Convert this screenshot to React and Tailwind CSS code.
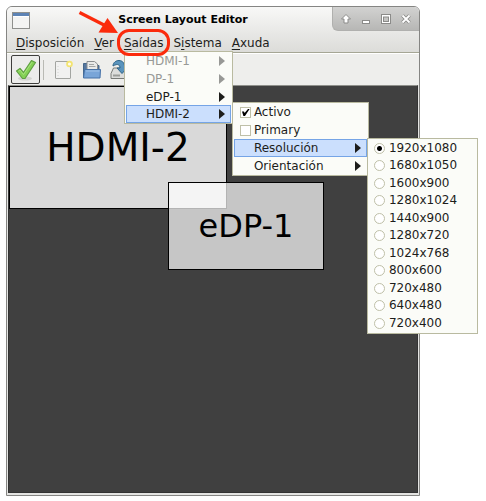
import React, { useState } from 'react'

const RESOLUTIONS = [
  '1920x1080',
  '1680x1050',
  '1600x900',
  '1280x1024',
  '1440x900',
  '1280x720',
  '1024x768',
  '800x600',
  '720x480',
  '640x480',
  '720x400',
]

const POPUP = 'absolute z-10 grid auto-rows-fr border border-[#b9baa0] bg-[#fbfcf8]'
const ROW = 'flex w-full items-center border text-left whitespace-nowrap'

function Arrow() {
  return (
    <svg viewBox="0 0 6 10" className="ml-auto h-[10px] w-[6px]" fill="currentColor" aria-hidden="true">
      <path d="M0 0L6 5L0 10Z" />
    </svg>
  )
}

function MenuRow({ label, selected, disabled, className, children }) {
  return (
    <li className="relative grid min-h-0">
      <button
        type="button"
        disabled={disabled}
        className={`${ROW} pr-[5px] ${className} ${selected ? 'border-[#75a4e6] bg-[#cbdffd]' : 'border-transparent'} ${disabled ? 'text-[#989996]' : ''}`}
      >
        {label}
        <Arrow />
      </button>
      {children}
    </li>
  )
}

function ResolutionMenu() {
  const [resolution, setResolution] = useState('1920x1080')

  return (
    <ul className={`${POPUP} -top-px left-[133px] h-[196px] w-[111px] pb-px leading-[15px]`}>
      {RESOLUTIONS.map((r) => (
        <li key={r} className="grid min-h-0">
          <label className={`${ROW} gap-1 border-transparent pl-[5px]`}>
            <input
              type="radio"
              name="resolution"
              checked={resolution === r}
              onChange={() => setResolution(r)}
              className="size-[11px] appearance-none rounded-full border border-[#bfc0a8] bg-white bg-[radial-gradient(circle,#000_0_2px,transparent_3px)] not-checked:bg-none"
            />
            {r}
          </label>
        </li>
      ))}
    </ul>
  )
}

function CheckRow({ label, defaultChecked }) {
  return (
    <li className="grid min-h-0">
      <label className={`${ROW} border-transparent pl-[5px]`}>
        <span className="relative mr-[3px] size-[11px]">
          <input
            type="checkbox"
            defaultChecked={defaultChecked}
            className="peer block size-[11px] appearance-none border border-[#bfc0a8] bg-white"
          />
          <svg viewBox="0 0 11 11" className="pointer-events-none absolute inset-0 hidden peer-checked:block" aria-hidden="true">
            <path d="M2 4.4L4 4.4L4.6 6L8 2L9.6 2L5 9L3.4 9Z" fill="#000" />
          </svg>
        </span>
        {label}
      </label>
    </li>
  )
}

function OutputMenu() {
  return (
    <ul className={`${POPUP} -top-[3px] left-[106px] h-[74px] w-[137px] px-px`}>
      <CheckRow label="Activo" defaultChecked />
      <CheckRow label="Primary" />
      <MenuRow label="Resolución" selected className="pl-[19px]">
        <ResolutionMenu />
      </MenuRow>
      <MenuRow label="Orientación" className="pl-[19px]" />
    </ul>
  )
}

function OutputsPopup() {
  return (
    <ul className={`${POPUP} top-full left-0 -mt-px h-[73px] w-[109px] px-px leading-4`}>
      <MenuRow label="HDMI-1" disabled className="pl-[19px]" />
      <MenuRow label="DP-1" disabled className="pl-[19px]" />
      <MenuRow label="eDP-1" className="pl-[19px]" />
      <MenuRow label="HDMI-2" selected className="pl-[19px]">
        <OutputMenu />
      </MenuRow>
    </ul>
  )
}

function Callout() {
  return (
    <>
      <span className="pointer-events-none absolute -inset-x-[7px] -top-[4px] -bottom-[4px] z-20 rounded-[12px] border-3 border-[#fb2b0c]" />
      <svg
        viewBox="0 0 42 26"
        className="pointer-events-none absolute -top-[22px] -left-[46px] z-20 h-[26px] w-[42px]"
        aria-hidden="true"
      >
        <path d="M1.5 1.5L28 15" stroke="#fb2b0c" strokeWidth="3.200" fill="none" />
        <path d="M40 22L20.500 21.500L29.500 7Z" fill="#fb2b0c" />
      </svg>
    </>
  )
}

function MenuItem({ before, mnemonic, after, children }) {
  return (
    <li className="relative">
      <button type="button" className="block h-[19px]">
        {before}
        <span className="underline underline-offset-2">{mnemonic}</span>
        {after}
      </button>
      {children}
    </li>
  )
}

function TitleBar() {
  return (
    <div className="flex h-[26px] items-start">
      <svg viewBox="0 0 18 17" className="mt-[5px] ml-[5px] h-[17px] w-[18px]" aria-hidden="true">
        <rect x="0.5" y="0.5" width="17" height="16" fill="#f4f4f3" stroke="#8f908d" />
        <rect x="1" y="1" width="16" height="3" fill="#5d83b5" />
        <rect x="1" y="4" width="16" height="1" fill="#fff" />
      </svg>
      <h1 className="flex-1 pt-1 pl-1 text-center text-[11px] leading-[18px] font-bold text-black">
        Screen Layout Editor
      </h1>
      <div className="flex h-[24px] w-[87px] items-center justify-between rounded-tr-[5px] rounded-bl-[6px] border-b border-l border-[#b0b0ae] bg-linear-to-b from-[#d2d2d1] to-[#b7b7b5] px-2">
        <button type="button" aria-label="Roll up">
          <svg viewBox="0 0 10 10" className="size-[10px]">
            <path d="M5 0.500L9.500 5H7V9H3V5H0.500Z" fill="#fff" stroke="#8b8b89" />
          </svg>
        </button>
        <button type="button" aria-label="Minimize">
          <svg viewBox="0 0 10 10" className="size-[10px]">
            <rect x="1.500" y="6.500" width="7" height="3" fill="#fff" stroke="#8b8b89" />
          </svg>
        </button>
        <button type="button" aria-label="Maximize">
          <svg viewBox="0 0 10 10" className="size-[10px]">
            <rect x="0.500" y="0.500" width="9" height="9" fill="#fff" stroke="#8b8b89" />
            <rect x="2.500" y="3" width="5" height="4.500" fill="#c4c4c2" stroke="#8b8b89" />
          </svg>
        </button>
        <button type="button" aria-label="Close">
          <svg viewBox="0 0 10 10" className="size-[10px]">
            <path d="M1.500 1.500L8.500 8.500M8.500 1.500L1.500 8.500" stroke="#8b8b89" strokeWidth="3.600" />
            <path d="M1.500 1.500L8.500 8.500M8.500 1.500L1.500 8.500" stroke="#fff" strokeWidth="1.800" />
          </svg>
        </button>
      </div>
    </div>
  )
}

function Toolbar() {
  return (
    <div className="flex h-8 items-center border-t border-white bg-[#eeeeec] pl-1">
      <button type="button" aria-label="Apply" className="grid size-[29px] place-items-center rounded-xs border border-[#3e3e3c] bg-[#ececeb]">
        <svg viewBox="0 0 22 22" className="size-[22px]">
          <ellipse cx="10" cy="19.500" rx="7" ry="2" fill="#d3d4d0" />
          <path d="M1.500 12L5 9.500L8.500 13.500L16.500 1.500L20.500 3.500L10 19.500H7.500Z" fill="#84d155" stroke="#5f9f42" strokeWidth="1.200" strokeLinejoin="round" />
          <path d="M3.500 12L5 11L8.500 15.500L17 3.200" fill="none" stroke="#a8e37f" />
        </svg>
      </button>
      <span className="ml-[3px] h-5 w-px bg-[#b9bab4]" />
      <button type="button" aria-label="New" className="ml-[10px]">
        <svg viewBox="0 0 20 20" className="size-5">
          <rect x="1.500" y="1.500" width="15" height="17" rx="0.500" fill="#f1f1f0" stroke="#a3a5a1" />
          <path d="M4 6V17" stroke="#d3d4d1" strokeDasharray="1 2" />
          <circle cx="15.500" cy="4" r="3.300" fill="#f3e46f" />
          <circle cx="15.500" cy="4" r="1.600" fill="#fffce8" />
        </svg>
      </button>
      <button type="button" aria-label="Open" className="ml-2">
        <svg viewBox="0 0 20 20" className="size-5">
          <path d="M1.500 17V3.500H7L8.500 5.500H17V17Z" fill="#56779f" stroke="#456689" />
          <path d="M5 10V1.500H12.500L15.500 4V10Z" fill="#e9eae9" stroke="#8b8e90" />
          <path d="M7 4.500H12M7 6.500H13.500" stroke="#a3a5a5" />
          <path d="M2.500 9.500H18.500L18 18H1.500Z" fill="#79a5d8" stroke="#4671a7" />
          <path d="M4 11H17.500" stroke="#a3c3e7" />
        </svg>
      </button>
      <button type="button" aria-label="Save" className="ml-2">
        <svg viewBox="0 0 20 20" className="size-5">
          <path d="M3.500 8H16.500L19 13.500V18.500H1V13.500Z" fill="#dcdddb" stroke="#777a76" />
          <path d="M3 15.500H10" stroke="#9a9c98" strokeWidth="2" />
          <path d="M3 6C3 2.500 6 0.500 9 0.500C13 0.500 15 4 14.500 8H17L12 13.500L7 8H10C10 5 8 3 3 6Z" fill="#5a94bd" stroke="#2d6387" />
        </svg>
      </button>
    </div>
  )
}

export default function App() {
  return (
    <div className="flex min-h-screen bg-white pt-[6px] pr-[66px] pb-[5px] pl-[6px] font-['DejaVu_Sans',sans-serif] text-[12px] leading-4 text-[#1d1d1b]">
      <main className="flex flex-1 flex-col rounded-t-[6px] border border-[#858583] bg-[#e4e4e2]">
        <header className="rounded-t-[5px] border-b border-[#a5a695] bg-linear-to-b from-[#f8f8f7] to-[#dcdcd9]">
          <TitleBar />
          <nav>
            <ul className="flex gap-[10px] pl-[9px]">
              <MenuItem mnemonic="D" after="isposición" />
              <MenuItem mnemonic="V" after="er" />
              <MenuItem mnemonic="S" after="aídas">
                <Callout />
                <OutputsPopup />
              </MenuItem>
              <MenuItem before="S" mnemonic="i" after="stema" />
              <MenuItem mnemonic="A" after="xuda" />
            </ul>
          </nav>
        </header>
        <Toolbar />
        <section className="relative mx-px mb-[2px] flex-1 border border-[#333] border-t-[#8f908b] bg-[#404040] text-black">
          <div className="absolute top-0 left-0 grid h-[123px] w-[218px] place-items-center border border-black bg-white/80 text-[39px]">
            HDMI-2
          </div>
          <div className="absolute top-[96px] left-[159px] grid h-[88px] w-[156px] place-items-center border border-black bg-white/70 bg-clip-padding text-[32px]">
            eDP-1
          </div>
        </section>
      </main>
    </div>
  )
}
